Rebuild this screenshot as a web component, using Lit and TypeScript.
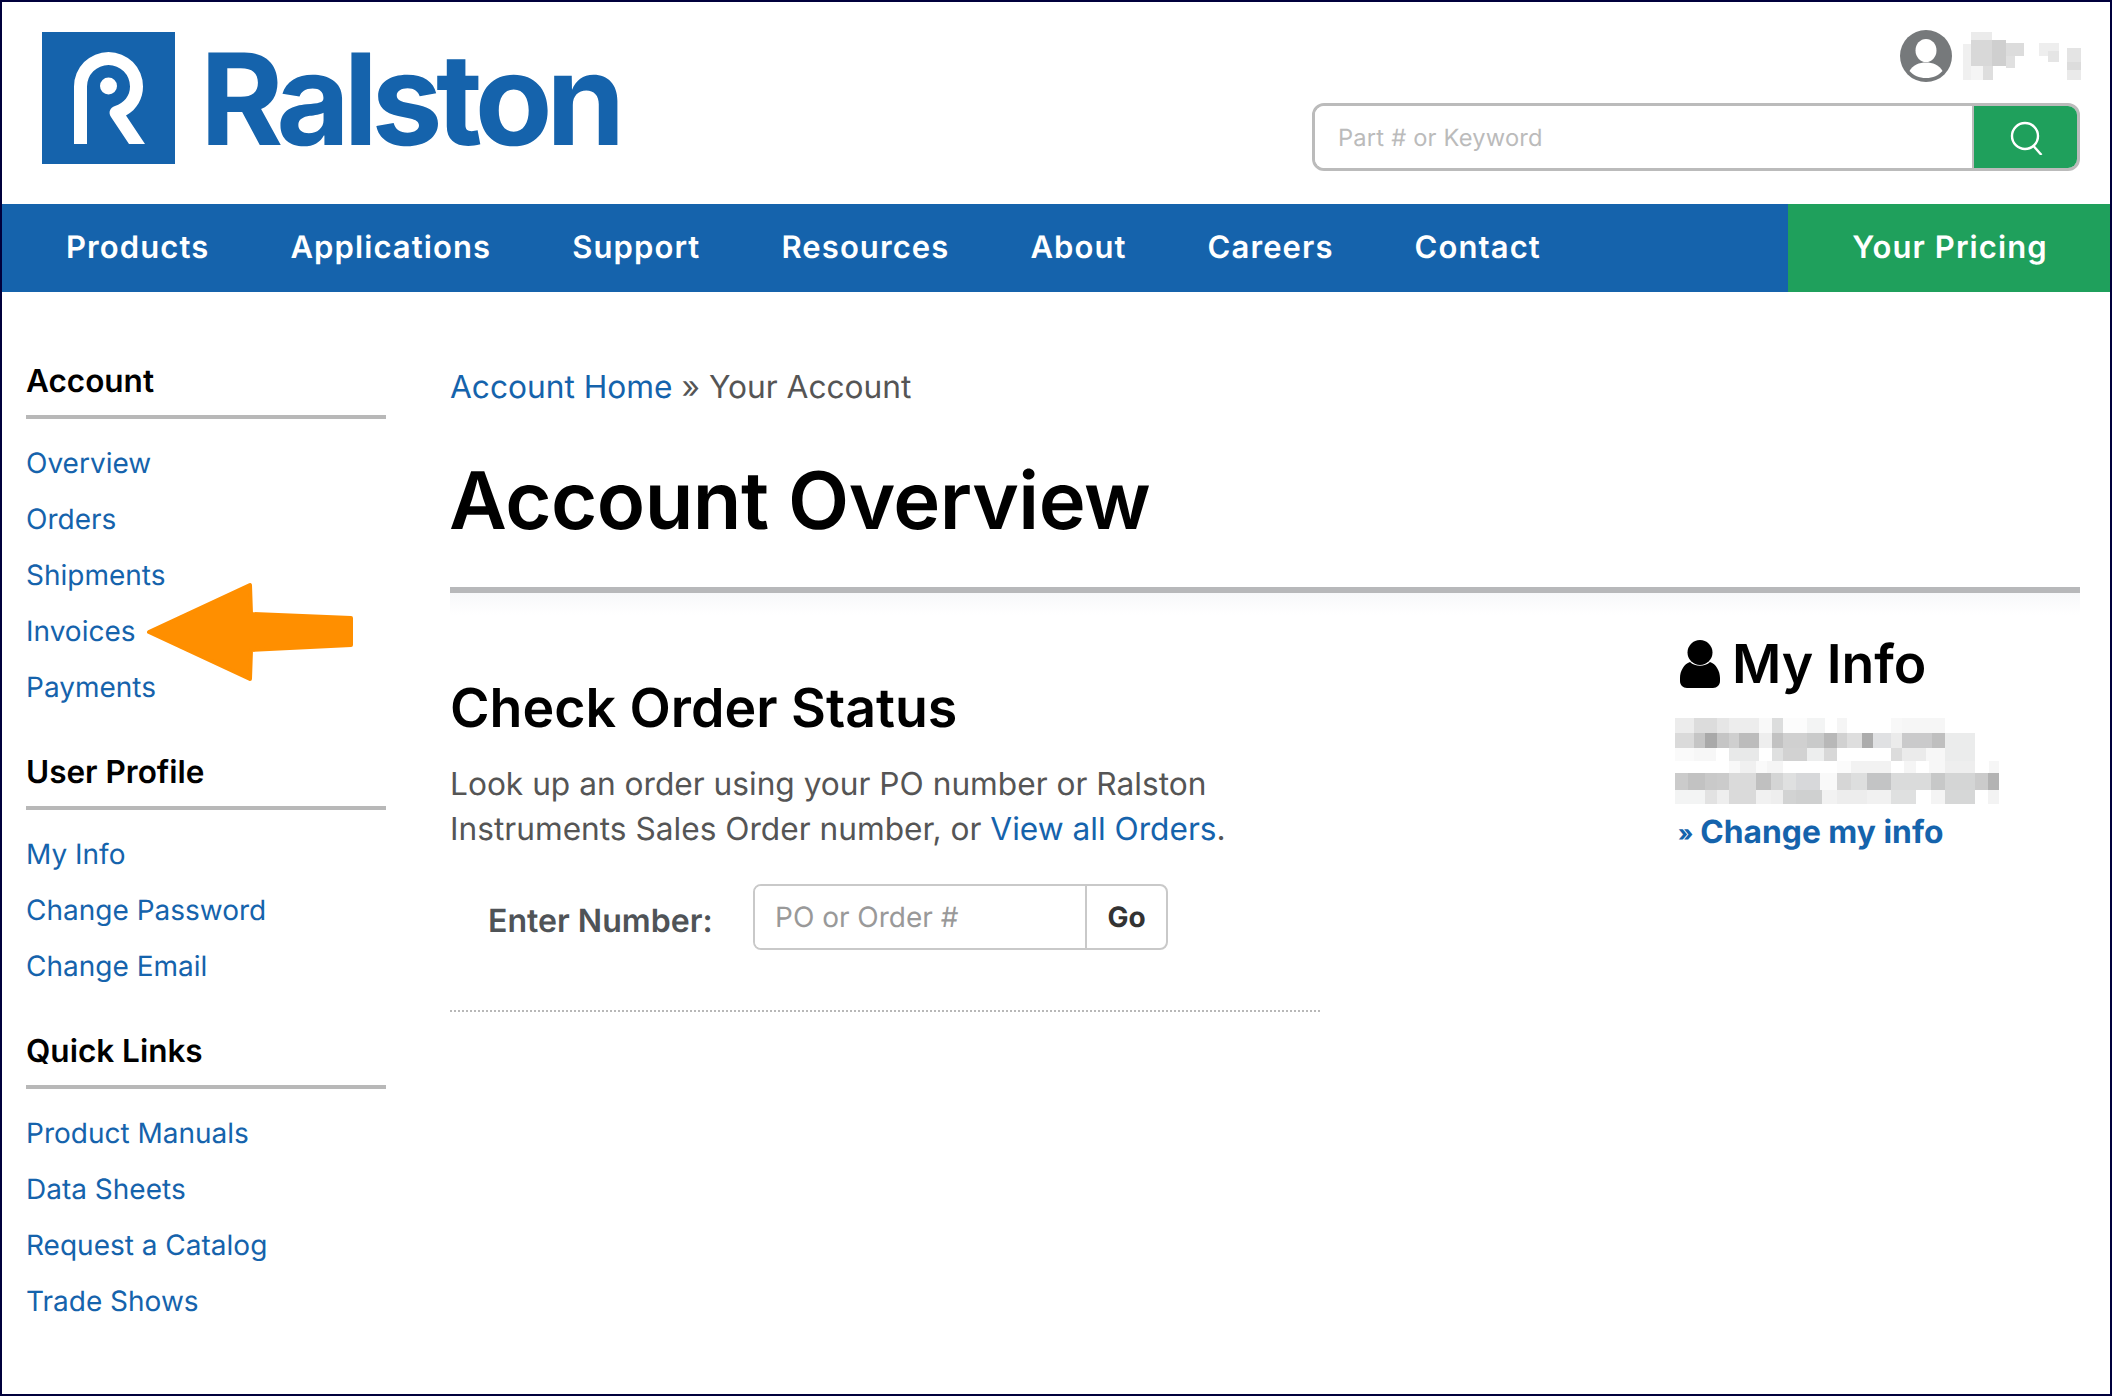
import { LitElement, html, css, svg } from "lit";
import { customElement } from "lit/decorators.js";

type Cell = [number, number, string];
const ROWS: [number, number, Cell[]][] = [
  [327, 372, [[105,162,"#ececec"],[162,232,"#dcdcdc"],[232,268,"#e6e6e6"],[268,357,"#ededed"],[357,396,"#f9f9f9"],[396,429,"#dcdddd"],[429,501,"#fcfcfc"],[501,555,"#f3f4f4"],[591,621,"#f5f5f5"],[753,787,"#f8f8f8"],[787,915,"#f6f6f6"]]],
  [372, 417, [[105,162,"#dadada"],[162,195,"#c5c5c5"],[195,232,"#a9a9a9"],[232,268,"#c5c5c5"],[268,297,"#cfcfcf"],[297,357,"#bcbcbc"],[357,396,"#eeeeee"],[396,429,"#c2c2c2"],[429,501,"#d0d0d0"],[501,552,"#c9caca"],[552,591,"#b8b8b8"],[591,621,"#d1d1d1"],[621,666,"#dedede"],[666,699,"#acacac"],[699,753,"#e0e1e3"],[753,787,"#ebebeb"],[787,876,"#cacacb"],[876,915,"#bfbfbf"],[915,1005,"#ebecec"]]],
  [417, 456, [[105,162,"#fafafa"],[162,228,"#f7f7f7"],[268,357,"#e8e9e9"],[396,429,"#dfe0e0"],[429,501,"#d2d2d2"],[501,552,"#edeeee"],[552,591,"#d8d8d8"],[753,787,"#dcdcdc"],[787,858,"#ebebeb"],[858,915,"#f7f7f7"],[915,1005,"#ebecec"]]],
  [456, 492, [[268,300,"#f8f8f8"],[300,348,"#f0f0f0"],[348,381,"#fafafa"],[381,429,"#f5f5f5"],[591,633,"#fbfbfb"],[633,753,"#f2f2f2"],[792,828,"#f5f5f5"],[867,915,"#f7f7f7"],[915,1005,"#eeeeee"],[1047,1077,"#f6f6f6"]]],
  [492, 543, [[105,144,"#cbcbcb"],[144,195,"#c2c2c2"],[195,232,"#c9c9c9"],[232,268,"#cbcbcb"],[268,348,"#dadada"],[348,393,"#c0c0c0"],[393,429,"#d4d5d5"],[429,468,"#dfe0e0"],[468,540,"#d7d8da"],[540,591,"#f9f9f9"],[591,633,"#d6d6d6"],[633,681,"#dddede"],[681,753,"#c3c4c5"],[753,873,"#dadbdb"],[873,915,"#c7c8c8"],[915,1005,"#d4d5d5"],[1005,1044,"#cbcbcb"],[1044,1077,"#b3b3b3"]]],
  [543, 585, [[105,195,"#f3f4f4"],[195,232,"#e2e2e2"],[232,268,"#eeeeee"],[268,348,"#dadada"],[348,393,"#f1f1f1"],[393,429,"#eeeeee"],[429,468,"#d2d3d3"],[468,546,"#cfd0d0"],[546,591,"#f2f2f2"],[591,681,"#ededed"],[681,753,"#f1f1f1"],[753,828,"#dfe0e0"],[873,915,"#f4f4f4"],[915,1005,"#d6d7d7"],[1044,1077,"#f3f3f3"]]],
];

const NAME: [number, number, number, number, string][] = [
  [1302,93,40,25,"#ebebeb"],[1287,130,15,107,"#f0f0f0"],[1302,118,40,77,"#d8d8d8"],[1342,118,26,77,"#cfcfcf"],
  [1368,127,34,38,"#dcdcdc"],[1368,165,17,35,"#e0e0e0"],[1325,195,19,42,"#dedede"],[1302,195,23,42,"#f5f5f5"],
  [1430,125,38,40,"#eeeeee"],[1448,150,20,33,"#e5e5e5"],[1483,140,27,43,"#e4e4e4"],[1483,183,27,25,"#dcdcdc"],[1483,208,27,29,"#eaeaea"],
];

const NAV = ["Products", "Applications", "Support", "Resources", "About", "Careers", "Contact"];
const GROUPS: [string, string[]][] = [
  ["Account", ["Overview", "Orders", "Shipments", "Invoices", "Payments"]],
  ["User Profile", ["My Info", "Change Password", "Change Email"]],
  ["Quick Links", ["Product Manuals", "Data Sheets", "Request a Catalog", "Trade Shows"]],
];

@customElement("app-root")
export class AppRoot extends LitElement {
  static styles = css`
    :host {
      display: block;
      position: relative;
      width: 2112px;
      height: 1396px;
      box-sizing: border-box;
      border: 2px solid #00003c;
      background: #fff;
      font-family: Inter, "Liberation Sans", sans-serif;
      color: #555;
      overflow: hidden;
      text-rendering: geometricPrecision;
    }
    a { color: #1563ac; text-decoration: none; }
    .header {
      display: flex;
      justify-content: space-between;
      height: 202px;
      padding: 30px 30px 0 40px;
      box-sizing: border-box;
    }
    .brand { display: flex; align-items: flex-start; gap: 25px; }
    .mark { display: block; width: 133px; height: 132px; }
    .word {
      font-size: 127px;
      line-height: 132px;
      font-weight: 700;
      color: #1563ac;
      letter-spacing: -6.500px;
      margin-top: 1px;
    }
    .tools { display: flex; flex-direction: column; align-items: flex-end; }
    .user { display: flex; align-items: center; gap: 11px; margin-right: -1px; height: 52px; margin-top: -2px; }
    .user svg { display: block; }
    .search {
      display: flex;
      width: 768px;
      height: 68px;
      box-sizing: border-box;
      margin-top: 21px;
      border: 3px solid #bbb;
      border-radius: 12px;
      overflow: hidden;
    }
    .search input {
      flex: 1;
      min-width: 0;
      border: 0;
      outline: 0;
      padding: 0 0 0 23px;
      font: 400 23.700px Inter, sans-serif;
      letter-spacing: 0.2px;
      background: #fff;
      text-rendering: geometricPrecision;
    }
    .search input::placeholder { color: #bbb; opacity: 1; }
    .search .btn {
      width: 105px;
      background: #1fa05c;
      display: flex;
      align-items: center;
      justify-content: center;
      border-left: 2px solid #bbb;
      box-sizing: border-box;
    }
    .nav {
      display: flex;
      height: 88px;
      background: #1563ac;
      align-items: stretch;
    }
    .nav-items { flex: 1; display: flex; align-items: center; gap: 81px; padding-left: 64px; }
    .nav a {
      color: #fff;
      font-size: 31px;
      font-weight: 600;
      letter-spacing: 1.100px;
      padding-bottom: 1px;
    }
    .pricing {
      width: 322px;
      background: #1fa05c;
      display: flex;
      align-items: center;
      justify-content: center;
      box-sizing: border-box;
      padding-left: 2px;
    }
    .body { display: flex; align-items: flex-start; }
    .side { width: 360px; margin-left: 24px; padding-top: 70px; flex: none; }
    .side h3 {
      margin: 0;
      color: #000;
      font-size: 31.500px;
      font-weight: 600;
      line-height: 38px;
      padding-bottom: 15px;
      border-bottom: 4px solid #b8b8b8;
    }
    .side ul { list-style: none; margin: 16px 0 38px; padding: 0; }
    .side li { height: 56px; display: flex; align-items: center; font-size: 28px; padding-bottom: 1px; box-sizing: border-box; }
    .main { flex: 1; margin-left: 64px; margin-right: 30px; padding-top: 71px; min-width: 0; }
    .crumb { font-size: 31.700px; line-height: 48px; }
    .main h1 {
      margin: 40px 0 0 -1px;
      font-size: 79.500px;
      line-height: 100px;
      font-weight: 600;
      color: #000;
      letter-spacing: -0.5px;
    }
    .rule {
      margin-top: 36px;
      height: 6px;
      background: #b7b8ba;
    }
    .fade { height: 22px; background: linear-gradient(#f7f8fa, #fff); }
    .cols { display: flex; justify-content: space-between; align-items: flex-start; }
    .status { width: 870px; padding-top: 58px; }
    .status h2 {
      margin: 0;
      color: #000;
      font-size: 53.700px;
      line-height: 70px;
      font-weight: 600;
    }
    .status p {
      margin: 19px 0 0;
      font-size: 31.670px;
      line-height: 44.500px;
      color: #555;
    }
    .form { display: flex; align-items: center; margin-top: 33px; padding-left: 38px; }
    .form label { font-size: 32.100px; font-weight: 600; width: 265px; flex: none; color: #4f5357; padding-top: 6px; }
    .group {
      display: flex;
      width: 415px;
      height: 66px;
      box-sizing: border-box;
      border: 2px solid #c9c9c9;
      border-radius: 8px;
      overflow: hidden;
    }
    .group input {
      flex: 1;
      min-width: 0;
      border: 0;
      outline: 0;
      padding: 0 0 0 20px;
      font: 400 28px Inter, sans-serif;
      text-rendering: geometricPrecision;
    }
    .group input::placeholder { color: #999; opacity: 1; }
    .group .go {
      width: 79px;
      flex: none;
      border-left: 2px solid #c9c9c9;
      display: flex;
      align-items: center;
      justify-content: center;
      font-size: 28px;
      font-weight: 700;
      color: #333;
    }
    .dots { margin-top: 59.500px; border-top: 2px dotted #b8b8b8; }
    .info { width: 405px; padding-top: 11px; }
    .info h2 {
      margin: 0;
      display: flex;
      align-items: center;
      gap: 12px;
      color: #000;
      font-size: 53.500px;
      line-height: 76px;
      font-weight: 600;
      padding-left: 5px;
    }
    .info .blur { display: block; margin-top: 16px; }
    .info .change { display: block; margin-top: 5px; padding-left: 3px; font-size: 31.800px; line-height: 46px; font-weight: 700; }
    .info .change .q { font-size: 22px; font-weight: 800; margin-right: 7px; position: relative; top: -2px; }
    .arrow { position: absolute; left: 0; top: 0; pointer-events: none; }
  `;

  render() {
    return html`
      <div class="header">
        <div class="brand">
          <svg class="mark" viewBox="0 0 133 132" aria-hidden="true">
            <rect width="133" height="132" fill="#1563ac"/>
            <path fill="#fff" d="M32 112V54.5a34.5 34.5 0 0 1 69 0c0 12-6 23-17 29l19 28.500H87L69 85c-3-5-1-9 4-11 9-3 15-10 15-19.500a21.500 21.500 0 0 0-43 0V112Z"/>
            <circle cx="66.500" cy="54" r="8.500" fill="#fff"/>
          </svg>
          <div class="word">Ralston</div>
        </div>
        <div class="tools">
          <div class="user">
            <svg width="52" height="52" viewBox="0 0 52 52" aria-hidden="true">
              <circle cx="26" cy="26" r="26" fill="#76797b"/>
              <path fill="#fff" d="M26 9a10.500 11.500 0 1 1 0 23 10.500 11.500 0 0 1 0-23Z"/>
              <path fill="#fff" d="M9.500 41c3-6 10-8.500 16.500-8.500S39.500 35 42.500 41C38.500 45.500 33 48 26 48S13.500 45.500 9.500 41Z"/>
            </svg>
            <svg width="118" height="48" viewBox="1287 93 223 144" preserveAspectRatio="none" aria-hidden="true" shape-rendering="crispEdges">
              ${NAME.map(([x, y, w, h, c]) => svg`<rect x=${x} y=${y} width=${w} height=${h} fill=${c}/>`)}
            </svg>
          </div>
          <div class="search">
            <input placeholder="Part # or Keyword" />
            <div class="btn">
              <svg width="36" height="36" viewBox="0 0 36 36" fill="none" stroke="#fff" stroke-width="2.400" aria-hidden="true">
                <circle cx="17" cy="17" r="13"/>
                <path d="M25.500 27l8 9"/>
              </svg>
            </div>
          </div>
        </div>
      </div>
      <nav class="nav">
        <div class="nav-items">${NAV.map((n) => html`<a href="#">${n}</a>`)}</div>
        <a class="pricing" href="#">Your Pricing</a>
      </nav>
      <div class="body">
        <aside class="side">
          ${GROUPS.map(
            ([title, links]) => html`
              <h3>${title}</h3>
              <ul>${links.map((l) => html`<li><a href="#">${l}</a></li>`)}</ul>
            `
          )}
        </aside>
        <main class="main">
          <div class="crumb"><a href="#">Account Home</a> » Your Account</div>
          <h1>Account Overview</h1>
          <div class="rule"></div>
          <div class="fade"></div>
          <div class="cols">
            <section class="status">
              <h2>Check Order Status</h2>
              <p>Look up an order using your PO number or Ralston<br />Instruments Sales Order number, or <a href="#">View all Orders</a>.</p>
              <div class="form">
                <label>Enter Number:</label>
                <div class="group">
                  <input placeholder="PO or Order #" />
                  <div class="go">Go</div>
                </div>
              </div>
              <div class="dots"></div>
            </section>
            <section class="info">
              <h2>
                <svg width="40" height="49" viewBox="0 0 40 49" aria-hidden="true">
                  <circle cx="20" cy="12.500" r="12.500" fill="#000"/>
                  <path fill="#000" d="M10 22c5 5 15 5 20 0 6 2 10 9 10 16v3c0 4-3 7-7 7H7c-4 0-7-3-7-7v-3c0-7 4-14 10-16Z"/>
                </svg>
                My Info
              </h2>
              <svg class="blur" width="324" height="86" viewBox="105 327 972 258" aria-hidden="true" shape-rendering="crispEdges">
                ${ROWS.map(([y0, y1, cells]) =>
                  cells.map(([a, b, c]) => svg`<rect x=${a} y=${y0} width=${b - a} height=${y1 - y0} fill=${c}/>`)
                )}
              </svg>
              <a class="change" href="#"><span class="q">»</span>Change my info</a>
            </section>
          </div>
        </main>
      </div>
      <svg class="arrow" width="2108" height="1392" aria-hidden="true">
        <path fill="#ff8f00" stroke="#ff8f00" stroke-width="4" stroke-linejoin="round" d="M147 630 L248 583 L249 612 L349 616 L349 643 L249 648 L248 677 Z"/>
      </svg>
    `;
  }
}
